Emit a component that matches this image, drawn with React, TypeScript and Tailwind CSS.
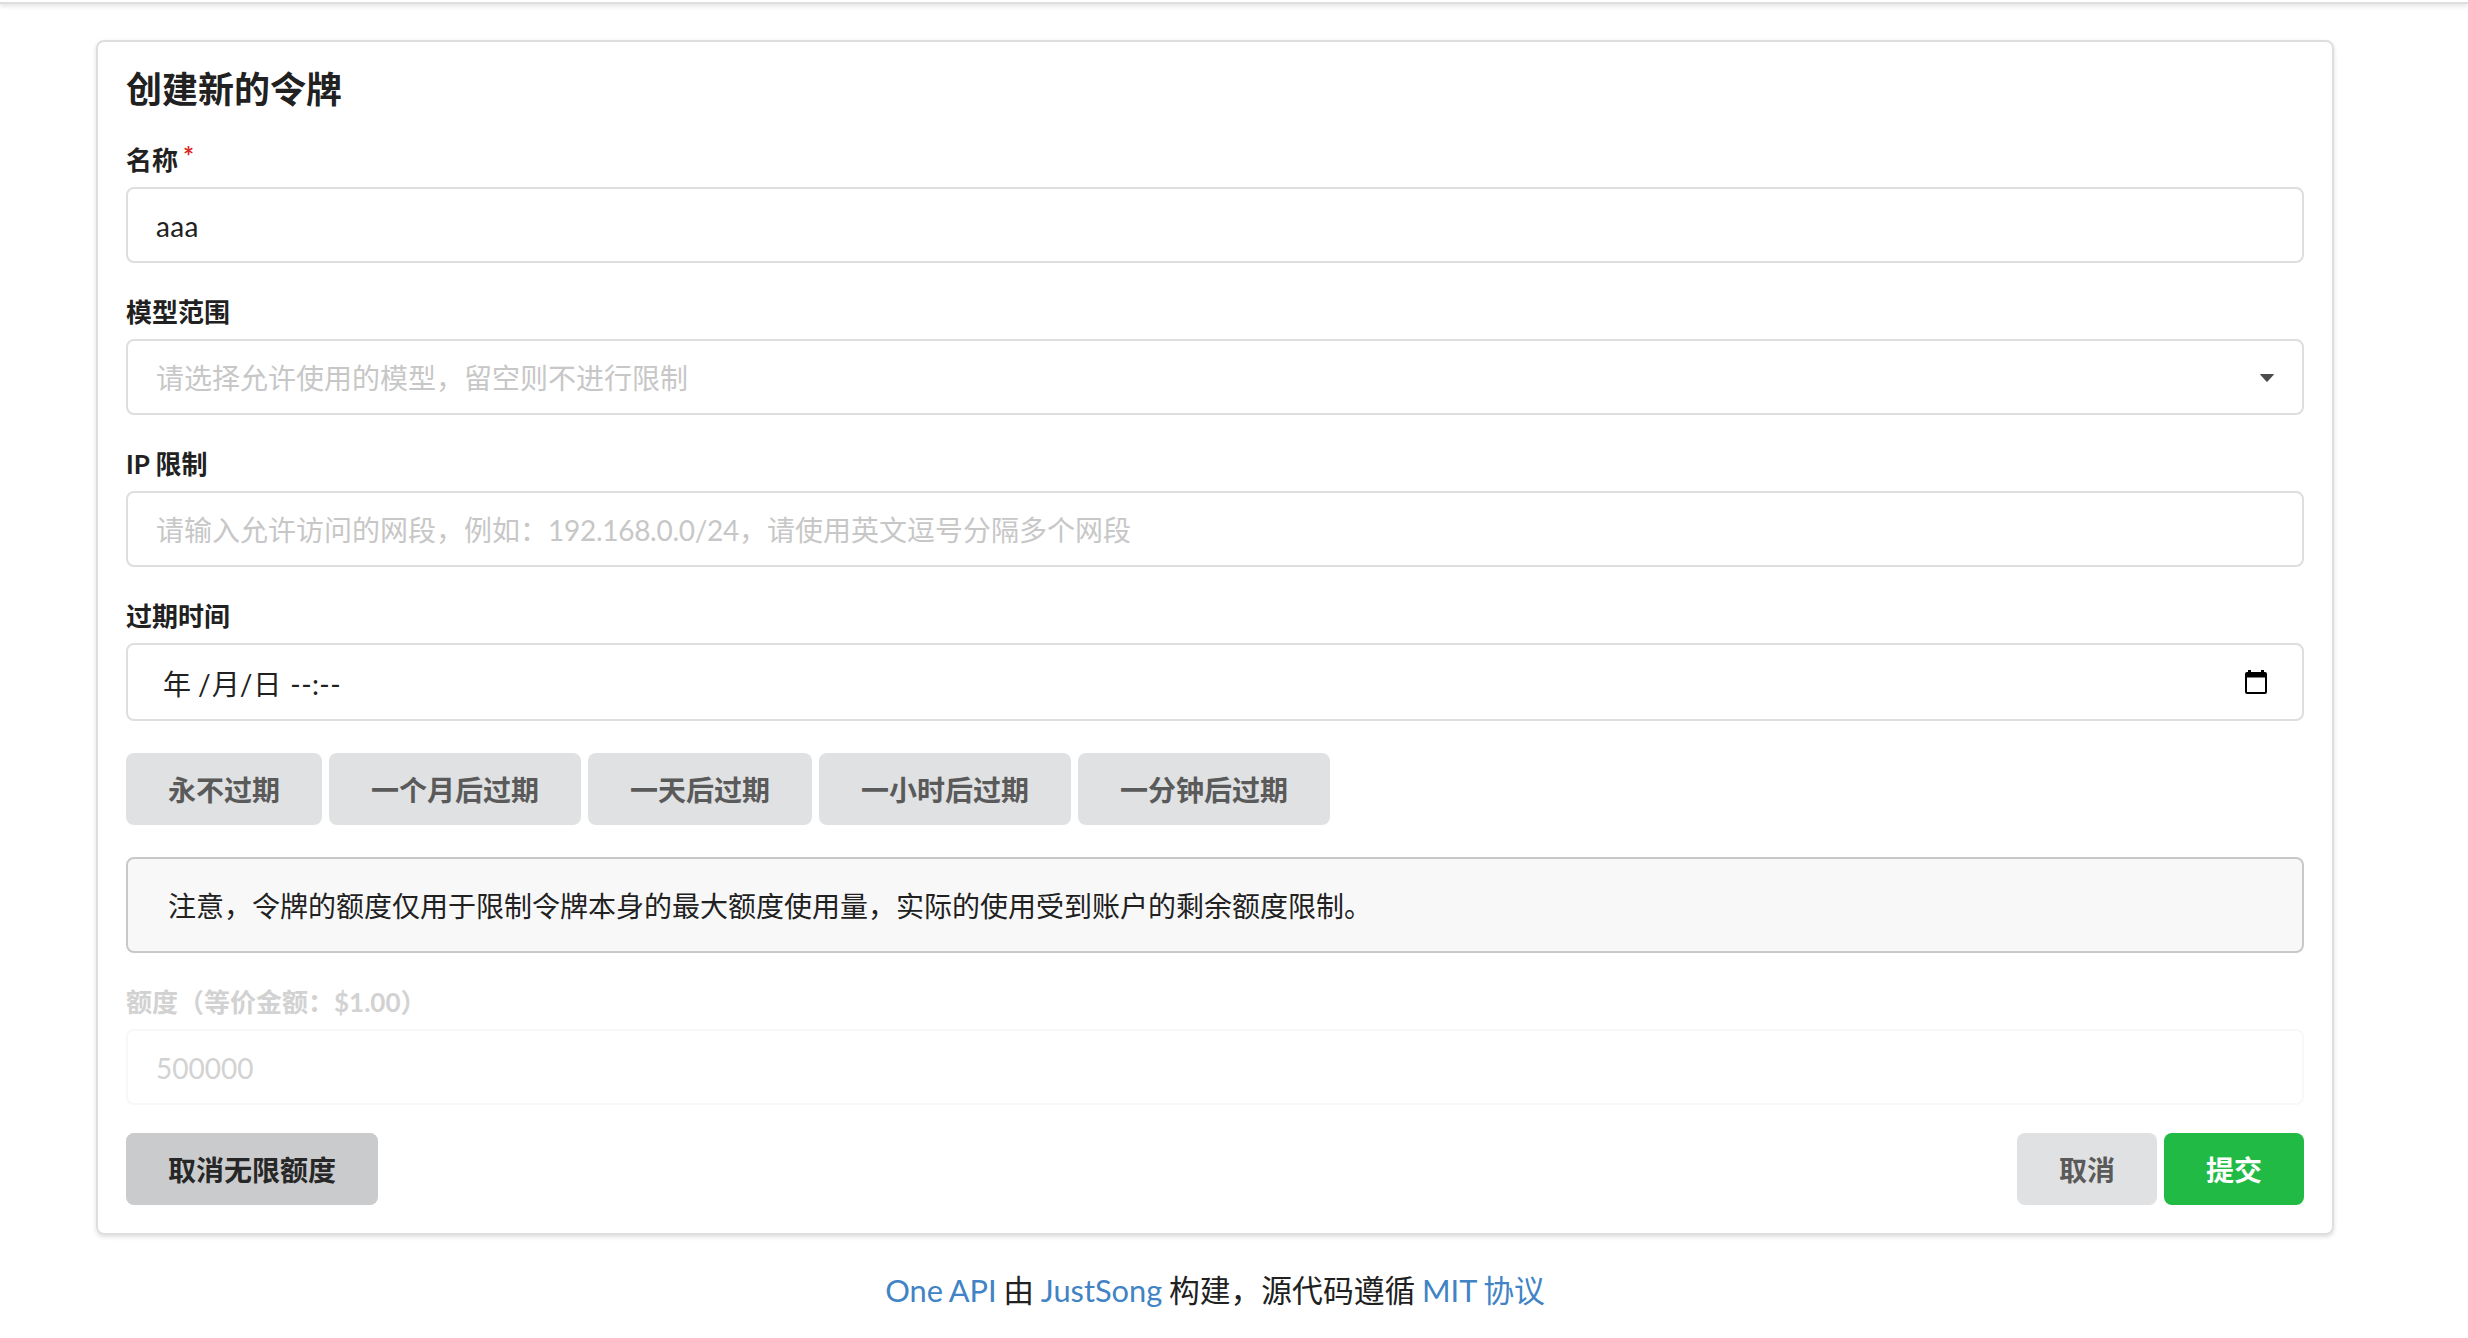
import type { ReactNode } from "react";

function Field({ label, required, disabled, children }: { label: string; required?: boolean; disabled?: boolean; children: ReactNode }) {
  return (
    <div className={disabled ? "mb-7 text-[#d2d2d2]" : "mb-7"}>
      <label className="mb-[7px] flex h-[41px] items-center text-[26px] font-bold leading-10">
        {label}
        {required && <span className="ml-[5px] -translate-y-1 text-[26px] font-bold text-[#db2828]">*</span>}
      </label>
      {children}
    </div>
  );
}

const box = "flex items-center rounded-[8px] border-2 px-7 pt-px text-[28px]";

function Button({ children, className }: { children: ReactNode; className: string }) {
  return (
    <button type="button" className={`h-[72px] rounded-[8px] px-[42px] pt-px text-[28px] leading-7 font-bold ${className}`}>
      {children}
    </button>
  );
}

const gray = "bg-[#e0e1e2] text-[#5a5a5a]";
const presets = ["永不过期", "一个月后过期", "一天后过期", "一小时后过期", "一分钟后过期"];

export default function App() {
  return (
    <div lang="zh-CN" className="h-[1338px] overflow-hidden bg-white font-['Lato','Noto_Sans_CJK_SC',sans-serif] text-[#212121]">
      <header className="h-1 border-b-2 border-[#dedede] shadow-[0_2px_4px_0_rgba(34,36,38,0.15)]" />
      <main className="mt-9 ml-24 h-[1195px] w-[2238px] rounded-[8px] border-2 border-[#dededf] px-7 pt-7 shadow-[0_2px_4px_0_rgba(34,36,38,0.15)]">
        <h2 className="mb-[31px] h-[38px] text-[36px] leading-[38px] font-bold">创建新的令牌</h2>
        <Field label="名称" required>
          <div className={`${box} h-[76px] border-[#dedede] tracking-[0.3px]`}>aaa</div>
        </Field>
        <Field label="模型范围">
          <div className={`${box} h-[76px] justify-between border-[#dedede] text-[#c7c7c7]`}>
            请选择允许使用的模型，留空则不进行限制
            <svg className="h-2 w-[14px] text-[#4c4c4c]" viewBox="0 0 14 8" fill="currentColor">
              <path d="M0.6 0h12.8q.8 0 .3.8L7.6 7.5q-.6.6-1.2 0L.3.8Q-.2 0 .6 0z" />
            </svg>
          </div>
        </Field>
        <Field label="IP 限制">
          <div className={`${box} h-[76px] border-[#dedede] text-[#c7c7c7]`}>
            请输入允许访问的网段，例如：<span className="tracking-[-0.28px]">192.168.0.0/24</span>，请使用英文逗号分隔多个网段
          </div>
        </Field>
        <Field label="过期时间">
          <div className={`${box} h-[78px] border-[#dedede]`}>
            <div className="flex pt-[2px]">
              <span className="ml-[7px]">年</span>
              <span className="ml-[7px]">/</span>
              <span className="ml-[1px]">月</span>
              <span>/</span>
              <span className="ml-[1px]">日</span>
              <span className="ml-[9px] tracking-[0.4px]">--:--</span>
            </div>
            <svg className="mr-[7px] mb-px ml-auto h-6 w-[22px]" viewBox="0 0 22 24" fill="black">
              <path fillRule="evenodd" d="M3 0h3v2h10V0h3v2h1a2 2 0 0 1 2 2v18a2 2 0 0 1-2 2H2a2 2 0 0 1-2-2V4a2 2 0 0 1 2-2h1zM2 7.5V22h18V7.5z" />
            </svg>
          </div>
        </Field>
        <div className="mt-8 mb-8 flex gap-[7px]">
          {presets.map((name) => (
            <Button key={name} className={gray}>{name}</Button>
          ))}
        </div>
        <div className="mb-7 flex h-24 items-center rounded-[8px] border-2 border-[#c7c8c9] bg-[#f8f8f9] px-10 pt-[2px] text-[28px]">
          注意，令牌的额度仅用于限制令牌本身的最大额度使用量，实际的使用受到账户的剩余额度限制。
        </div>
        <Field label="额度（等价金额：$1.00）" disabled>
          <div className={`${box} h-[76px] border-[#f8f8f8]`}>500000</div>
        </Field>
        <div className="flex gap-[7px]">
          <Button className="mr-auto bg-[#cacbcd] text-[#272727]">取消无限额度</Button>
          <Button className={gray}>取消</Button>
          <Button className="bg-[#21ba45] text-white">提交</Button>
        </div>
      </main>
      <footer className="mt-9 ml-24 w-[2238px] text-center text-[30.8px] leading-10 [word-spacing:-1.2px]">
        <span className="text-[#4183c4]">One API</span> 由 <span className="text-[#4183c4]">JustSong</span> 构建，源代码遵循{" "}
        <span className="text-[#4183c4]">MIT 协议</span>
      </footer>
    </div>
  );
}
